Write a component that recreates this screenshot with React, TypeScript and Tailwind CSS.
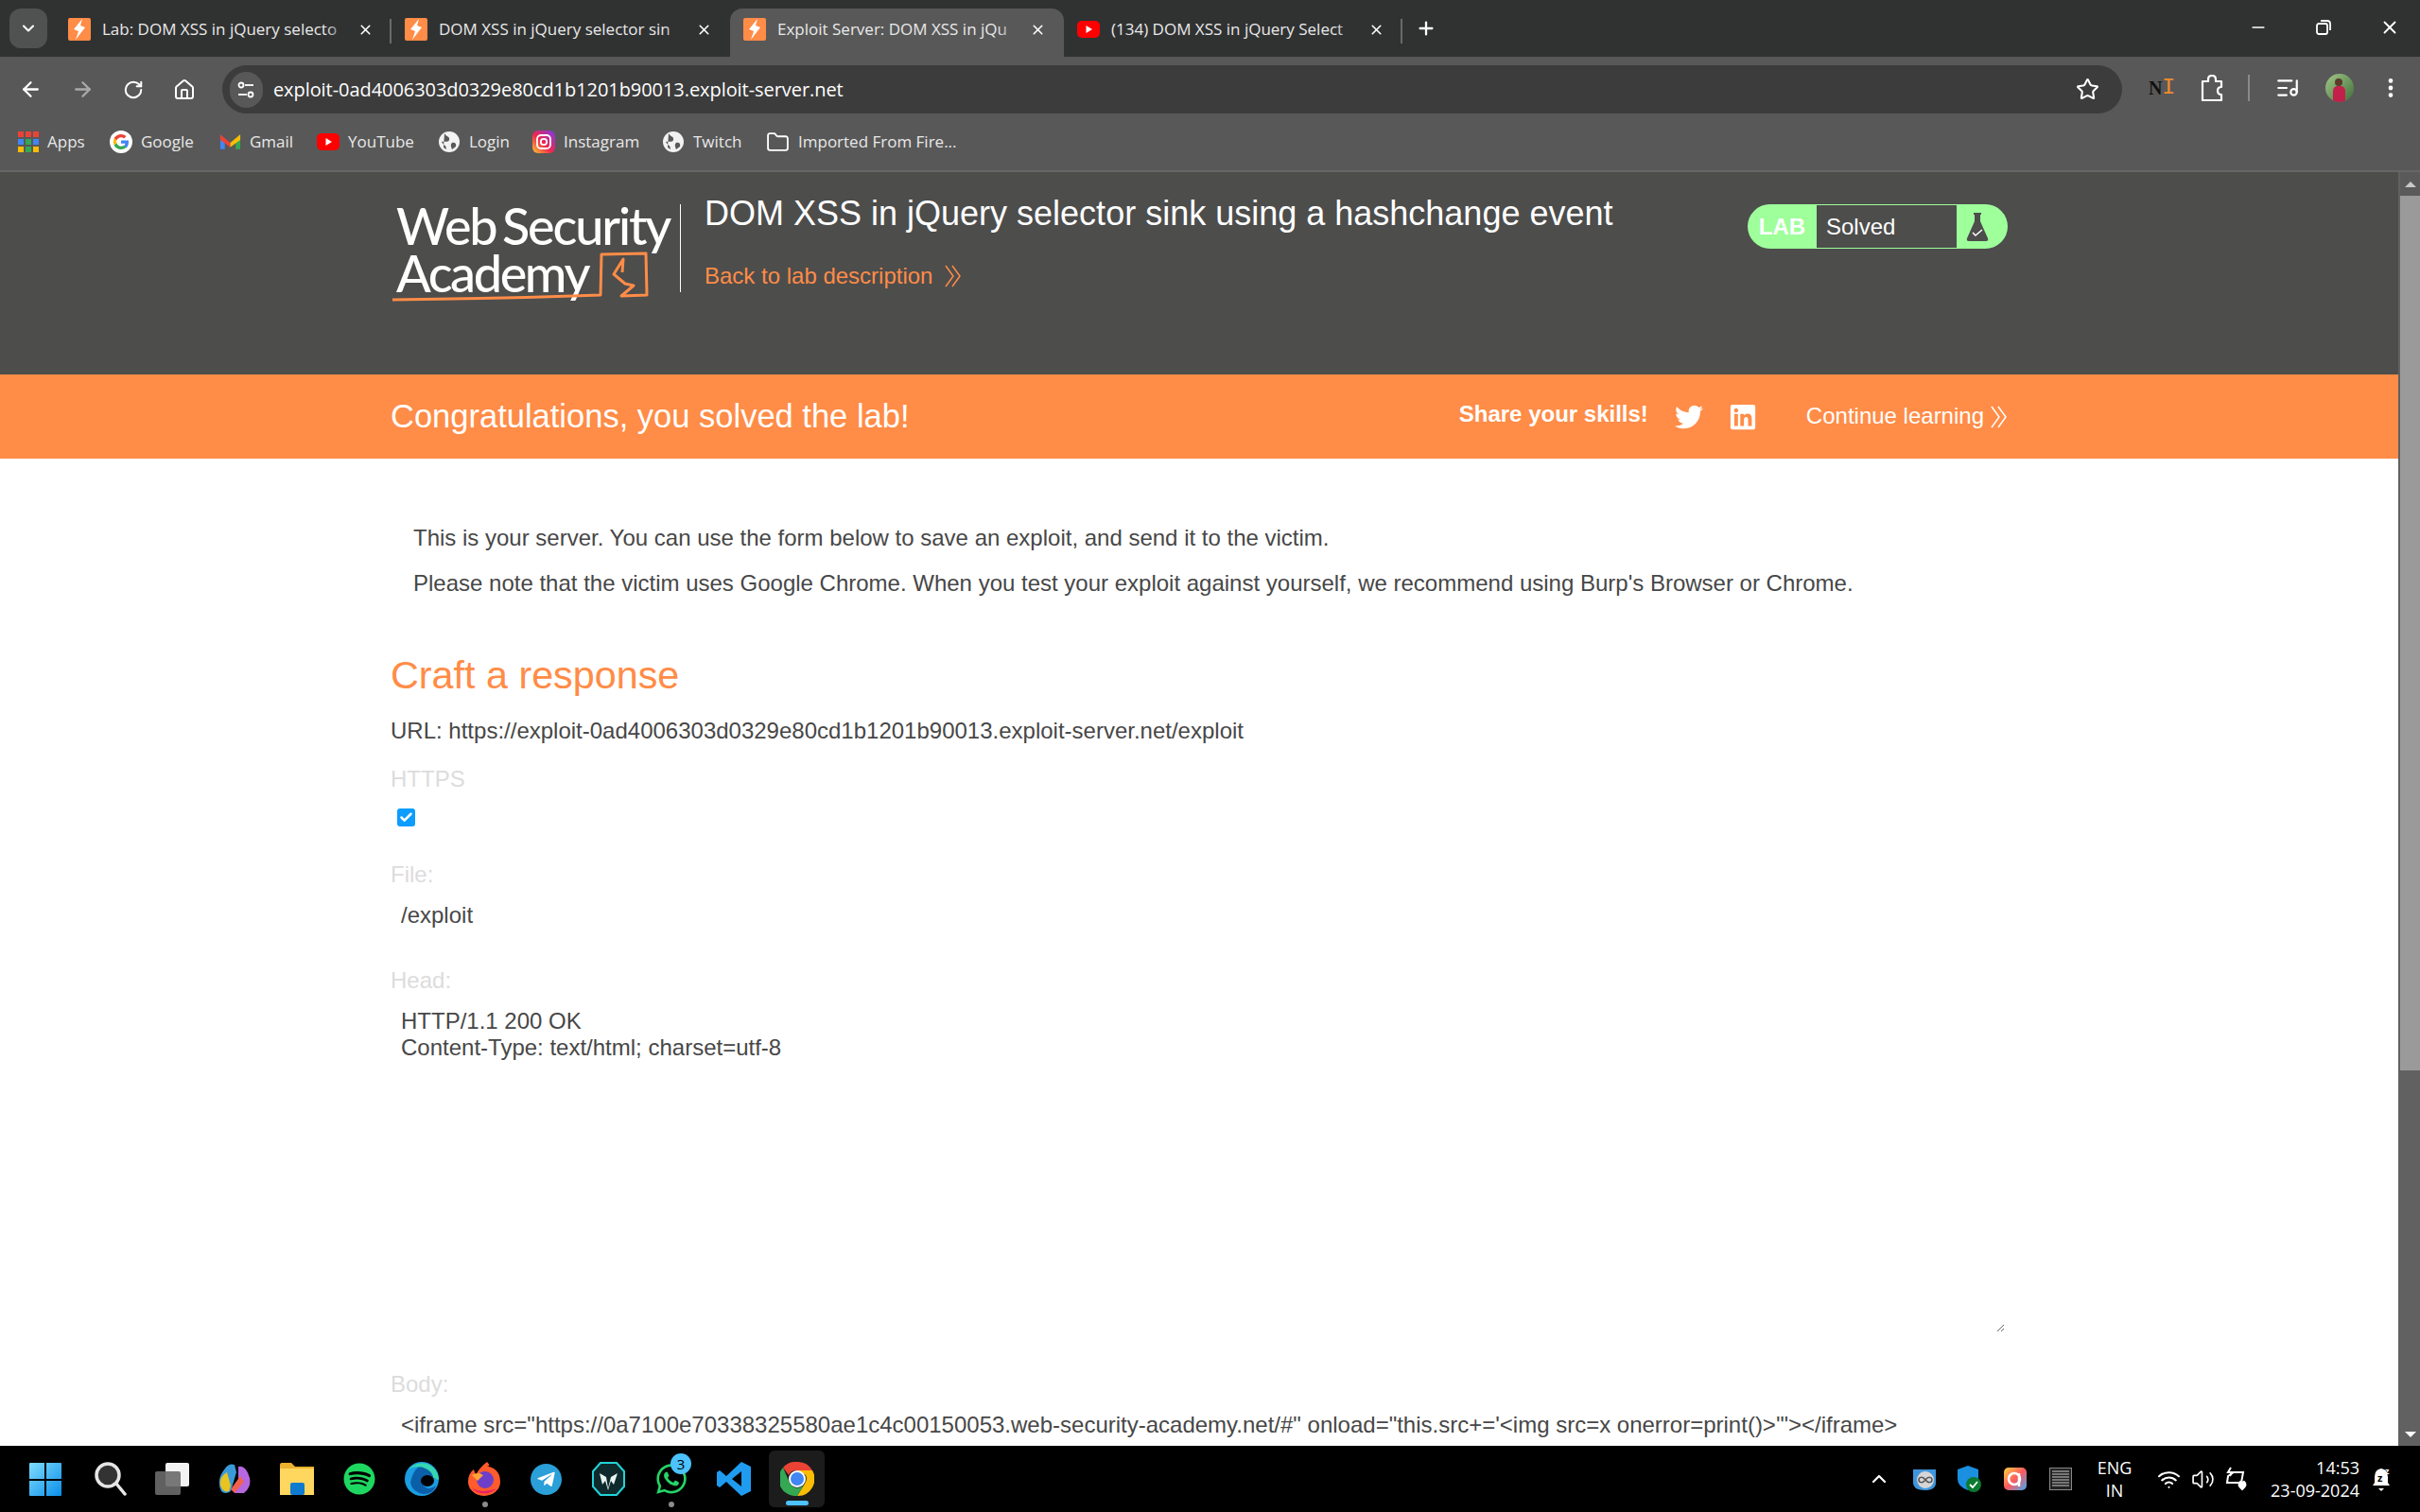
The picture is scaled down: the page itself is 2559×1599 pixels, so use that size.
import React from 'react'
import { ArrowLeft, ArrowRight, RotateCw, Home, Star, X, Plus, Minus, ChevronDown, ChevronUp, ListMusic, EllipsisVertical, Folder, Wifi, Volume2, Check } from 'lucide-react'
import { FaTwitter, FaLinkedin, FaWhatsapp, FaTelegramPlane, FaSpotify } from 'react-icons/fa'

const uiFont = "font-['Open_Sans',sans-serif]"

const Favicon = () => (
  <svg width="24" height="24" viewBox="0 0 24 24" className="shrink-0">
    <rect width="24" height="24" rx="2" fill="#ff8c47" />
    <path d="M15 1 L6 12 L11 14 L8 23 L18 10 L13 8 Z" fill="#fff" />
  </svg>
)

const YtIcon = ({ size = 24 }: { size?: number }) => (
  <svg width={size} height={size} viewBox="0 0 24 24" className="shrink-0">
    <rect x="0" y="3" width="24" height="18" rx="5" fill="#f00" />
    <path d="M9.5 8 L16 12 L9.5 16 Z" fill="#fff" />
  </svg>
)

const DoubleChevron = ({ className }: { className: string }) => (
  <svg width="18" height="24" viewBox="0 0 18 24" fill="none" stroke="currentColor" strokeWidth="1.500" className={className}>
    <path d="M1 1 L9 12 L1 23" />
    <path d="M8 1 L16 12 L8 23" />
  </svg>
)

const Tab = ({ icon, title, width, active, sep }: { icon: React.ReactNode; title: string; width: string; active?: boolean; sep?: boolean }) => (
  <div className={`relative flex h-[51px] items-center pb-[7px] pl-[14px] pr-[19px] rounded-t-[13px] ${width} ${active ? 'bg-[#585858]' : ''}`}>
    {icon}
    <div className="relative ml-[12px] flex-1 overflow-hidden">
      <span className="block whitespace-nowrap text-[17px] leading-[24px] text-[#e9e9e9]">{title}</span>
      <span className={`absolute right-0 top-0 h-full w-[26px] bg-gradient-to-r from-transparent ${active ? 'to-[#585858]' : 'to-[#303232]'}`} />
    </div>
    <X size={17} strokeWidth={2.2} className="ml-2 shrink-0 text-white" />
    {sep && <span className="absolute right-0 top-[11px] h-[26px] w-[2px] bg-[#6a6a6a]" />}
  </div>
)

const Bookmark = ({ icon, label, width }: { icon: React.ReactNode; label: string; width: string }) => (
  <div className={`flex items-center gap-[9px] ${width}`}>
    {icon}
    <span className="whitespace-nowrap text-[17px] text-[#e8e8e8]">{label}</span>
  </div>
)

const GoogleIcon = () => (
  <svg width="24" height="24" viewBox="0 0 24 24" className="shrink-0">
    <circle cx="12" cy="12" r="12" fill="#fff" />
    <path d="M20 12.2c0-.6-.1-1.200-.2-1.700H12v3.300h4.500c-.2 1-.8 1.900-1.700 2.500l2.700 2.100c1.600-1.500 2.500-3.600 2.500-6.200z" fill="#4285f4" />
    <path d="M12 20c2.200 0 4-.7 5.500-2l-2.700-2.100c-.7.500-1.700.8-2.800.8-2.100 0-3.900-1.400-4.600-3.400l-2.800 2.200C6 18.300 8.800 20 12 20z" fill="#34a853" />
    <path d="M7.400 13.300c-.4-1-.4-2 0-3L4.600 8.100c-1 2.400-1 5.400 0 7.400z" fill="#fbbc05" />
    <path d="M12 7.200c1.200 0 2.300.4 3.100 1.200l2.400-2.400C16 4.700 14.200 4 12 4 8.800 4 6 5.700 4.600 8.100l2.800 2.200C8.100 8.600 9.900 7.200 12 7.200z" fill="#ea4335" />
  </svg>
)

const GmailIcon = () => (
  <svg width="23" height="24" viewBox="0 0 24 24" className="shrink-0">
    <path d="M1 4 L1 20 L6 20 L6 9 Z" fill="#4285f4" />
    <path d="M23 4 L23 20 L18 20 L18 9 Z" fill="#34a853" />
    <path d="M1 4 L12 13 L12 18 L1 10 Z" fill="#ea4335" />
    <path d="M23 4 L12 13 L12 18 L23 10 Z" fill="#fbbc05" />
  </svg>
)

const AppsIcon = () => (
  <div className="grid h-[22px] w-[22px] shrink-0 grid-cols-3 gap-[2px]">
    {['#ea4335', '#ea4335', '#ea4335', '#4285f4', '#34a853', '#4285f4', '#fbbc05', '#34a853', '#fbbc05'].map((c, i) => (
      <span key={i} className="h-[6px] w-[6px]" style={{ backgroundColor: c }} />
    ))}
  </div>
)

const InstaIcon = () => (
  <svg width="24" height="24" viewBox="0 0 24 24" className="shrink-0">
    <defs>
      <linearGradient id="ig" x1="0" y1="1" x2="1" y2="0">
        <stop offset="0" stopColor="#fdc92f" />
        <stop offset="0.45" stopColor="#f0264f" />
        <stop offset="1" stopColor="#7a3bea" />
      </linearGradient>
    </defs>
    <rect width="24" height="24" rx="6" fill="url(#ig)" />
    <rect x="5" y="5" width="14" height="14" rx="4" fill="none" stroke="#fff" strokeWidth="1.800" />
    <circle cx="12" cy="12" r="3.200" fill="none" stroke="#fff" strokeWidth="1.800" />
  </svg>
)

const GlobeFilled = () => (
  <svg width="24" height="24" viewBox="0 0 24 24" className="shrink-0">
    <circle cx="12" cy="12" r="11" fill="#f2f2f2" />
    <path d="M7 3 C9 7 13 6 12 10 C11 13 6 11 4 12 C6 16 9 15 9 20 L6 18 Z M15 13 C18 12 20 14 19 17 L15 20 C14 17 13 15 15 13 Z" fill="#585858" />
  </svg>
)

const Logo = () => (
  <div className="relative h-[105px] w-[302px] shrink-0 font-['Lato',sans-serif] font-medium text-white">
    <div className="mt-[-2px] pl-[6px] text-[54px] leading-[50px] tracking-[-2.150px] [word-spacing:-5px] whitespace-nowrap">Web Security</div>
    <div className="pl-[6px] text-[54px] leading-[50px] tracking-[-2.400px] whitespace-nowrap">Academy</div>
    <svg width="302" height="105" viewBox="0 0 302 105" className="absolute left-0 top-0">
      <path d="M2 101 Q100 100 192 97 L222 96 L223 53 L270 52 L271 96 L244 97 L257 86 L248 84 L236 74 L246 58 L245 72" fill="none" stroke="#ff8c47" strokeWidth="3" strokeLinejoin="round" />
    </svg>
  </div>
)

const Flask = () => (
  <svg width="24" height="32" viewBox="0 0 24 32">
    <path d="M8 1 H16 V3 H15 V10 L23 28 Q24 31 21 31 H3 Q0 31 1 28 L9 10 V3 H8 Z" fill="#4d4d4c" />
    <path d="M7 22 L10 25 L17 19" fill="none" stroke="#fff" strokeWidth="1.500" />
  </svg>
)

const FieldLabel = ({ children, className }: { children: React.ReactNode; className: string }) => (
  <label className={`block text-[24px] leading-[28px] text-[#dcdcdc] ${className}`}>{children}</label>
)

const Taskbar = () => (
  <div className={`relative flex h-[70px] shrink-0 items-center bg-black text-white ${uiFont}`}>
    <div className="flex flex-1 items-center pl-[31px]">
      {/* windows */}
      <svg width="34" height="35" viewBox="0 0 34 35" className="mr-[35px]">
        <defs>
          <linearGradient id="win" x1="0" y1="0" x2="1" y2="1">
            <stop offset="0" stopColor="#7fdcff" />
            <stop offset="1" stopColor="#0a8fe8" />
          </linearGradient>
        </defs>
        <path d="M0 1 Q0 0 1 0 H16 V17 H0 Z M18 0 H33 Q34 0 34 1 V17 H18 Z M0 19 H16 V35 H1 Q0 35 0 34 Z M18 19 H34 V34 Q34 35 33 35 H18 Z" fill="url(#win)" />
      </svg>
      <svg width="34" height="36" viewBox="0 0 34 36" className="mr-[30px]">
        <circle cx="14" cy="14" r="12" fill="#333" stroke="#e6e6e6" strokeWidth="3.500" />
        <path d="M23 23 L32 34" stroke="#e6e6e6" strokeWidth="3.500" strokeLinecap="round" />
      </svg>
      <svg width="36" height="34" viewBox="0 0 36 34" className="mr-[30px]">
        <rect x="11" y="0" width="25" height="25" rx="2" fill="#f2f2f2" />
        <rect x="0" y="9" width="27" height="25" rx="2" fill="#6a6a6a" opacity="0.9" />
      </svg>
      <svg width="36" height="34" viewBox="0 0 36 34" className="mr-[30px]">
        <path d="M8 6 Q12 0 18 2 L20 10 L14 30 Q8 34 4 30 Q-2 18 8 6 Z" fill="#3a9ad9" />
        <path d="M3 24 Q2 14 10 10 L14 24 L12 30 Q6 32 3 24 Z" fill="#e9c322" />
        <path d="M22 4 Q30 2 34 16 Q36 26 28 32 L18 32 L22 18 Z" fill="#b667e0" />
        <path d="M14 28 L24 14 L28 20 L18 32 Z" fill="#f2614e" />
      </svg>
      <svg width="36" height="34" viewBox="0 0 36 34" className="mr-[31px]">
        <path d="M0 2 Q0 0 2 0 H12 L16 4 H36 V34 H0 Z" fill="#ecb22e" />
        <path d="M0 6 H36 V34 H0 Z" fill="#ffd75e" />
        <rect x="11" y="21" width="15" height="13" rx="2" fill="#0f7bd0" />
      </svg>
      <FaSpotify size={34} className="mr-[31px] text-[#1ed760]" />
      <svg width="36" height="36" viewBox="0 0 36 36" className="mr-[31px]">
        <circle cx="18" cy="18" r="18" fill="#1b9de2" />
        <path d="M6 22 Q8 32 20 34 Q30 34 33 25 Q27 30 22 27 Q16 24 20 18 L33 18 Q34 8 24 4 Q10 2 6 22 Z" fill="#0b5fa8" />
        <path d="M36 18 A18 18 0 0 0 4 8 Q14 2 24 8 Q30 12 30 17 L36 19 Z" fill="#36d6b0" />
        <ellipse cx="24" cy="20" rx="7" ry="6" fill="#000" />
      </svg>
      <div className="relative mr-[32px] h-[36px] w-[34px]">
        <svg width="34" height="36" viewBox="0 0 34 36">
          <path d="M17 4 Q34 6 34 21 A17 15 0 0 1 0 21 Q0 12 6 8 L8 14 Q12 6 20 0 Q26 6 17 4 Z" fill="#ff5b2c" />
          <path d="M4 28 A17 15 0 0 0 30 28 Q17 34 4 28 Z" fill="#ed1f66" />
          <circle cx="18" cy="19" r="9" fill="#6d3fc9" />
          <path d="M4 14 Q10 10 16 14 L10 20 Z" fill="#ffa436" />
        </svg>
        <span className="absolute left-[15px] top-[42px] h-[6px] w-[6px] rounded-full bg-[#8c8c8c]" />
      </div>
      <div className="mr-[32px] flex h-[33px] w-[33px] items-center justify-center rounded-full bg-[#2a9fd8]">
        <FaTelegramPlane size={21} className="text-white" />
      </div>
      <svg width="35" height="36" viewBox="0 0 35 36" className="mr-[31px]">
        <path d="M9 1 H26 L34 10 V26 L26 35 H9 L1 26 V10 Z" fill="#0f2a2c" stroke="#22d3d8" strokeWidth="2" />
        <path d="M8 12 L15 16 L17 28 L20 16 L27 12 L23 24 L20 20 L17 30 L14 20 L11 24 Z" fill="#e8f4f2" />
      </svg>
      <div className="relative mr-[30px] h-[36px] w-[36px]">
        <FaWhatsapp size={36} className="text-[#25d366]" />
        <span className="absolute -right-[3px] -top-[9px] flex h-[22px] w-[22px] items-center justify-center rounded-full bg-[#4cc2ff] text-[15px] text-black">3</span>
        <span className="absolute left-[15px] top-[42px] h-[6px] w-[6px] rounded-full bg-[#8c8c8c]" />
      </div>
      <svg width="36" height="36" viewBox="0 0 36 36" className="mr-[19px]">
        <path d="M26 0 L36 5 V31 L26 36 L10 21 L3 27 L0 25 V11 L3 9 L10 15 Z M26 10 L16 18 L26 26 Z" fill="#1f9cf0" />
      </svg>
      <div className="relative flex h-[60px] w-[59px] items-center justify-center rounded-[6px] bg-[#1c1c1c]">
        <svg width="36" height="36" viewBox="0 0 36 36">
          <path d="M18 0 A18 18 0 0 1 34 9 L18 9 A9 9 0 0 0 9 14 L3 6 A18 18 0 0 1 18 0 Z" fill="#ea4335" />
          <path d="M34 9 A18 18 0 0 1 18 36 L26 23 A9 9 0 0 0 27 14 L18 9 Z" fill="#fbbc05" />
          <path d="M3 6 A18 18 0 0 0 18 36 L26 23 A9 9 0 0 1 10 22 Z" fill="#34a853" />
          <circle cx="18" cy="18" r="9" fill="#fff" />
          <circle cx="18" cy="18" r="7" fill="#4285f4" />
        </svg>
        <span className="absolute bottom-[2px] left-[18px] h-[5px] w-[24px] rounded-full bg-[#4cc2ff]" />
      </div>
    </div>
    <div className="flex items-center pr-[29px]">
      <ChevronUp size={24} strokeWidth={2.200} className="mr-[24px]" />
      <svg width="24" height="24" viewBox="0 0 24 24" className="mr-[23px]">
        <path d="M0 2 H24 V16 Q24 24 12 24 Q0 24 0 16 Z" fill="#3f95dc" />
        <circle cx="13" cy="13" r="9" fill="#d5d5d5" />
        <path d="M13 13 C10 9 6 10 6 13 C6 16 10 17 13 13 C16 9 20 10 20 13 C20 16 16 17 13 13 Z" fill="none" stroke="#555" strokeWidth="1.500" />
      </svg>
      <svg width="26" height="28" viewBox="0 0 26 28" className="mr-[23px]">
        <path d="M11 0 L22 4 V14 Q22 22 11 26 Q0 22 0 14 V4 Z" fill="#1b8fe0" />
        <circle cx="17" cy="20" r="8" fill="#0d7a32" />
        <path d="M13 20 L16 23 L21 17" fill="none" stroke="#fff" strokeWidth="1.800" />
      </svg>
      <svg width="24" height="24" viewBox="0 0 24 24" className="mr-[24px]">
        <defs>
          <linearGradient id="tray" x1="0" y1="0" x2="1" y2="1">
            <stop offset="0" stopColor="#ffd23f" />
            <stop offset="0.5" stopColor="#ff5a5f" />
            <stop offset="1" stopColor="#3fa9f5" />
          </linearGradient>
        </defs>
        <rect width="24" height="24" rx="5" fill="url(#tray)" />
        <circle cx="11" cy="12" r="6" fill="none" stroke="#fff" strokeWidth="2.500" />
        <path d="M16 6 V20" stroke="#fff" strokeWidth="2.500" />
      </svg>
      <div className="mr-[26px] flex h-[24px] w-[24px] flex-col gap-[1px] border border-[#888] bg-[#222] p-[2px]">
        {[0, 1, 2, 3, 4, 5].map(i => (
          <span key={i} className="h-[2px] w-full bg-[#777]" />
        ))}
      </div>
      <div className="mr-[26px] w-[38px] text-center text-[18px] leading-[24px]">
        <div>ENG</div>
        <div>IN</div>
      </div>
      <Wifi size={25} strokeWidth={2} className="mr-[11px]" />
      <Volume2 size={25} strokeWidth={1.600} className="mr-[10px]" />
      <svg width="25" height="26" viewBox="0 0 25 26" className="mr-[24px]" fill="none" stroke="#fff" strokeWidth="2">
        <path d="M4 10 L10 6 H20 L18 17 H3 Z" />
        <path d="M7 1 L4 6 H8 L6 10" />
        <path d="M19 24 Q13 19 17 16 L19 17 L21 16 Q25 19 19 24 Z" fill="#fff" />
      </svg>
      <div className="mr-[13px] w-[94px] whitespace-nowrap text-right text-[18px] leading-[24px]">
        <div>14:53</div>
        <div>23-09-2024</div>
      </div>
      <svg width="22" height="28" viewBox="0 0 22 28">
        <path d="M10 3 Q3 4 3 12 V18 L1 21 H19 L17 18 V12 Q17 4 10 3 Z" fill="#fff" />
        <path d="M7 24 H13 L10 27 Z" fill="#fff" />
        <text x="6" y="17" fontSize="11" fontWeight="700" fill="#000">z</text>
        <text x="14" y="9" fontSize="9" fontWeight="700" fill="#fff">z</text>
      </svg>
    </div>
  </div>
)

const App = () => {
  return (
    <div className="flex h-[1599px] w-[2559px] flex-col overflow-hidden bg-white font-['Liberation_Sans',Arial,sans-serif]">
      {/* tab strip */}
      <div className={`flex h-[60px] shrink-0 items-end bg-[#303232] ${uiFont}`}>
        <div className="mb-[9px] ml-[10px] flex h-[42px] w-[40px] items-center justify-center rounded-[12px] bg-[#505252]">
          <ChevronDown size={20} strokeWidth={2.500} className="text-white" />
        </div>
        <div className="ml-[8px] flex items-end">
          <Tab icon={<Favicon />} title="Lab: DOM XSS in jQuery selecto" width="w-[356px]" sep />
          <Tab icon={<Favicon />} title="DOM XSS in jQuery selector sin" width="w-[358px]" />
          <Tab icon={<Favicon />} title="Exploit Server: DOM XSS in jQu" width="w-[353px]" active />
          <Tab icon={<YtIcon />} title="(134) DOM XSS in jQuery Select" width="w-[358px]" sep />
        </div>
        <Plus size={22} strokeWidth={2.500} className="mb-[19px] ml-[14px] text-white" />
        <div className="ml-auto mb-[20px] flex items-center gap-[49px] pr-[21px] text-white">
          <Minus size={20} />
          <svg width="20" height="20" viewBox="0 0 20 20" fill="none" stroke="#fff" strokeWidth="1.800">
            <rect x="3" y="6" width="11" height="11" rx="2" />
            <path d="M7 3 H14 Q17 3 17 6 V13" />
          </svg>
          <X size={22} />
        </div>
      </div>
      {/* toolbar */}
      <div className={`flex h-[60px] shrink-0 items-end bg-[#585858] pl-[20px] pr-[18px] ${uiFont}`}>
        <div className="mb-[13px] flex w-[215px] items-center text-white">
          <ArrowLeft size={25} strokeWidth={2.200} />
          <ArrowRight size={25} strokeWidth={2.200} className="ml-[30px] text-[#a9a9a9]" />
          <RotateCw size={22} strokeWidth={2.200} className="ml-[30px]" />
          <Home size={24} strokeWidth={2} className="ml-[31px]" />
        </div>
        <div className="flex h-[51px] w-[2010px] items-center rounded-full bg-[#3c3c3c] pl-[8px] pr-[24px]">
          <div className="flex h-[38px] w-[35px] items-center justify-center rounded-full bg-[#585858]">
            <svg width="20" height="20" viewBox="0 0 20 20" fill="none" stroke="#fff" strokeWidth="1.800">
              <circle cx="5" cy="5" r="2.500" />
              <path d="M9 5 H18" />
              <circle cx="15" cy="15" r="2.500" />
              <path d="M2 15 H11" />
            </svg>
          </div>
          <span className="ml-[11px] flex-1 text-[20px] tracking-[-0.060px] text-white">exploit-0ad4006303d0329e80cd1b1201b90013.exploit-server.net</span>
          <Star size={25} strokeWidth={2} className="text-white" />
        </div>
        <div className="mb-[12px] ml-[28px] flex flex-1 items-center text-white">
          <span className="relative w-[24px] font-['Liberation_Serif',serif] text-[20px] font-bold leading-none text-[#111]">
            N<span className="absolute left-[14px] top-[-2px] font-['Liberation_Mono',monospace] text-[24px] font-normal text-[#f08a2e]">I</span>
          </span>
          <svg width="26" height="28" viewBox="0 0 26 28" fill="none" stroke="#fff" strokeWidth="2.200" className="ml-[30px]">
            <path d="M3 7 H9 V5 Q9 1 13 1 Q17 1 17 5 V7 H23 V13 Q19 13 19 17 Q19 21 23 21 V27 H3 Z" strokeLinejoin="round" />
          </svg>
          <span className="ml-[25px] h-[28px] w-[2px] bg-[#8a8a8a]" />
          <ListMusic size={26} strokeWidth={2} className="ml-[27px]" />
          <div className="relative ml-[27px] h-[30px] w-[30px] overflow-hidden rounded-full bg-gradient-to-br from-[#a5c98a] to-[#3f6f3a]">
            <span className="absolute left-[10px] top-[5px] h-[8px] w-[8px] rounded-full bg-[#5a3a2a]" />
            <span className="absolute bottom-0 left-[8px] h-[17px] w-[13px] rounded-t-[5px] bg-[#c21f4a]" />
          </div>
          <EllipsisVertical size={26} strokeWidth={2.400} className="ml-[26px]" />
        </div>
      </div>
      {/* bookmarks */}
      <div className={`flex h-[62px] shrink-0 items-center border-b-2 border-[#666] bg-[#585858] pl-[19px] ${uiFont}`}>
        <Bookmark icon={<AppsIcon />} label="Apps" width="w-[97px]" />
        <Bookmark icon={<GoogleIcon />} label="Google" width="w-[116px]" />
        <Bookmark icon={<GmailIcon />} label="Gmail" width="w-[103px]" />
        <Bookmark icon={<YtIcon />} label="YouTube" width="w-[128px]" />
        <Bookmark icon={<GlobeFilled />} label="Login" width="w-[100px]" />
        <Bookmark icon={<InstaIcon />} label="Instagram" width="w-[137px]" />
        <Bookmark icon={<GlobeFilled />} label="Twitch" width="w-[110px]" />
        <Bookmark icon={<Folder size={25} strokeWidth={1.800} className="text-white" />} label="Imported From Fire..." width="w-[260px]" />
      </div>
      {/* page */}
      <div className="flex min-h-0 flex-1">
        <div className="min-w-0 flex-1 overflow-hidden">
          <div className="h-[214px] bg-[#4d4d4c] pl-[413px] pt-[34px]">
            <div className="flex w-[1710px] items-start">
              <Logo />
              <div className="ml-[4px] h-[93px] w-px bg-white" />
              <div className="ml-[25px] flex-1 text-white">
                <h2 className="mt-[-11px] text-[36px] leading-[42px]">DOM XSS in jQuery selector sink using a hashchange event</h2>
                <a className="mt-[31px] flex items-center text-[24px] leading-[28px] text-[#ff8c47]">
                  Back to lab description
                  <DoubleChevron className="ml-[13px]" />
                </a>
              </div>
              <div className="flex h-[47px] w-[275px] overflow-hidden rounded-[24px] bg-[#9eff9b]">
                <div className="flex w-[73px] items-center justify-center text-[24px] font-bold text-white">LAB</div>
                <div className="my-px flex flex-1 items-center bg-[#4d4d4c] pl-[10px] text-[24px] text-white">Solved</div>
                <div className="flex w-[54px] items-center justify-center pr-[10px]">
                  <Flask />
                </div>
              </div>
            </div>
          </div>
          <div className="flex h-[89px] items-center bg-[#ff8c47] pl-[413px] text-white">
            <div className="flex w-[1710px] items-center">
              <h4 className="flex-1 text-[34.500px]">Congratulations, you solved the lab!</h4>
              <span className="mb-[5px] mr-[-2px] text-[24px] font-bold">Share your skills!</span>
              <FaTwitter size={30} className="ml-[30px]" />
              <FaLinkedin size={30} className="ml-[27px]" />
              <span className="mb-[2px] ml-[52px] text-[24px]">Continue learning</span>
              <DoubleChevron className="ml-[7px]" />
            </div>
          </div>
          <div className="ml-[413px] w-[1710px] text-[#474747]">
            <div className="pl-[24px] pt-[70px] text-[24px] leading-[28px]">
              <p>This is your server. You can use the form below to save an exploit, and send it to the victim.</p>
              <p className="mt-[20px]">Please note that the victim uses Google Chrome. When you test your exploit against yourself, we recommend using Burp's Browser or Chrome.</p>
            </div>
            <h3 className="mt-[58px] text-[41.300px] leading-[50px] text-[#ff8c47]">Craft a response</h3>
            <div className="mt-[20px] text-[24px] leading-[28px]">URL: https://exploit-0ad4006303d0329e80cd1b1201b90013.exploit-server.net/exploit</div>
            <FieldLabel className="mt-[23px]">HTTPS</FieldLabel>
            <div className="relative ml-[7px] mt-[17px] h-[19px] w-[19px]">
              <input type="checkbox" defaultChecked readOnly className="block h-[19px] w-[19px] appearance-none rounded-[3px] bg-[#0d9dff]" />
              <Check size={15} strokeWidth={4} className="pointer-events-none absolute left-[2px] top-[2px] text-white" />
            </div>
            <FieldLabel className="mt-[37px]">File:</FieldLabel>
            <input readOnly defaultValue="/exploit" className="mt-[15px] block h-[28px] w-full pl-[11px] text-[24px] leading-[28px] text-[#474747] outline-none" />
            <FieldLabel className="mt-[41px]">Head:</FieldLabel>
            <textarea
              readOnly
              defaultValue={'HTTP/1.1 200 OK\nContent-Type: text/html; charset=utf-8'}
              className="mt-[15px] block h-[343px] w-[1707px] resize-y pl-[11px] pr-[2px] text-[24px] leading-[28px] text-[#474747] outline-none"
            />
            <FieldLabel className="mt-[41px]">Body:</FieldLabel>
            <div className="mt-[15px] whitespace-nowrap pl-[11px] text-[24px] leading-[28px]">{'<iframe src="https://0a7100e70338325580ae1c4c00150053.web-security-academy.net/#" onload="this.src+=\'<img src=x onerror=print()>\'"></iframe>'}</div>
          </div>
        </div>
        {/* scrollbar */}
        <div className="flex w-[23px] shrink-0 flex-col bg-[#616161] pl-[2px]">
          <div className="flex h-[25px] items-center justify-center bg-[#5a5a5a]">
            <span className="h-0 w-0 border-x-[6px] border-b-[6px] border-x-transparent border-b-[#c8c8c8]" />
          </div>
          <div className="h-[925px] bg-[#9a9a9a]" />
          <div className="flex-1" />
          <div className="flex h-[25px] items-center justify-center">
            <span className="h-0 w-0 border-x-[6px] border-t-[6px] border-x-transparent border-t-white" />
          </div>
        </div>
      </div>
      <Taskbar />
    </div>
  )
}

export default App
